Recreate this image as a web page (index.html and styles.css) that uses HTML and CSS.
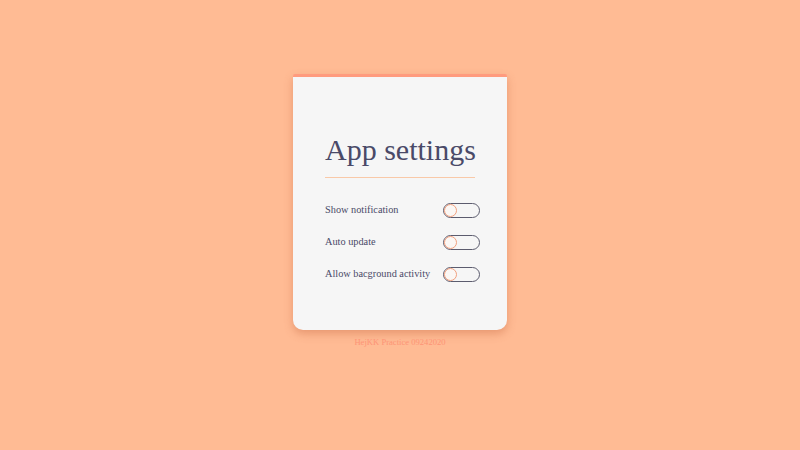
FILE: index.html
```html
<!DOCTYPE html>
<html>
<head>
<meta charset="utf-8">
<link rel="stylesheet" href="styles.css">
</head>
<body>
<main class="page">
  <section class="card">
    <h1 class="title">App settings</h1>
    <div class="rows">
      <div class="row"><span class="label">Show notification</span><span class="toggle"><span class="knob"></span></span></div>
      <div class="row"><span class="label">Auto update</span><span class="toggle"><span class="knob"></span></span></div>
      <div class="row"><span class="label">Allow bacground activity</span><span class="toggle"><span class="knob"></span></span></div>
    </div>
  </section>
  <p class="footer">HejKK Practice 09242020</p>
</main>
</body>
</html>
```
FILE: styles.css
```css
html, body {
  margin: 0;
  padding: 0;
  height: 100%;
}
body {
  background: #ffbb94;
  font-family: "Liberation Serif", "Times New Roman", serif;
}
.page {
  display: flex;
  flex-direction: column;
  align-items: center;
  padding-top: 74px;
}
.card {
  box-sizing: border-box;
  width: 214px;
  height: 256px;
  background: #f6f6f6;
  border-top: 3px solid #ff9b7e;
  border-radius: 2px 2px 10px 10px;
  box-shadow: 0 4px 8px rgba(205, 110, 70, 0.45);
  padding: 0 27px 0 32px;
  display: flex;
  flex-direction: column;
}
.title {
  margin: 53px 0 0 0;
  width: 150px;
  font-weight: normal;
  font-size: 30px;
  line-height: 40px;
  color: #4a4a68;
  padding-bottom: 7px;
  border-bottom: 1px solid #f9c9a8;
  white-space: nowrap;
}
.rows {
  display: flex;
  flex-direction: column;
  gap: 17px;
  margin-top: 25px;
}
.row {
  display: flex;
  align-items: center;
  justify-content: space-between;
  height: 15px;
}
.label {
  font-size: 10.3px;
  color: #4a4a68;
  white-space: nowrap;
  padding-bottom: 3px;
}
.toggle {
  box-sizing: border-box;
  width: 37px;
  height: 15px;
  border: 1px solid #5c5c6e;
  border-radius: 8px;
  display: flex;
  align-items: center;
}
.knob {
  box-sizing: border-box;
  width: 13px;
  height: 13px;
  border: 1px solid #f2a07e;
  border-radius: 50%;
  background: #fbf7f4;
}
.footer {
  margin: 7px 0 0 0;
  font-size: 8.6px;
  color: #fd9476;
}
```
